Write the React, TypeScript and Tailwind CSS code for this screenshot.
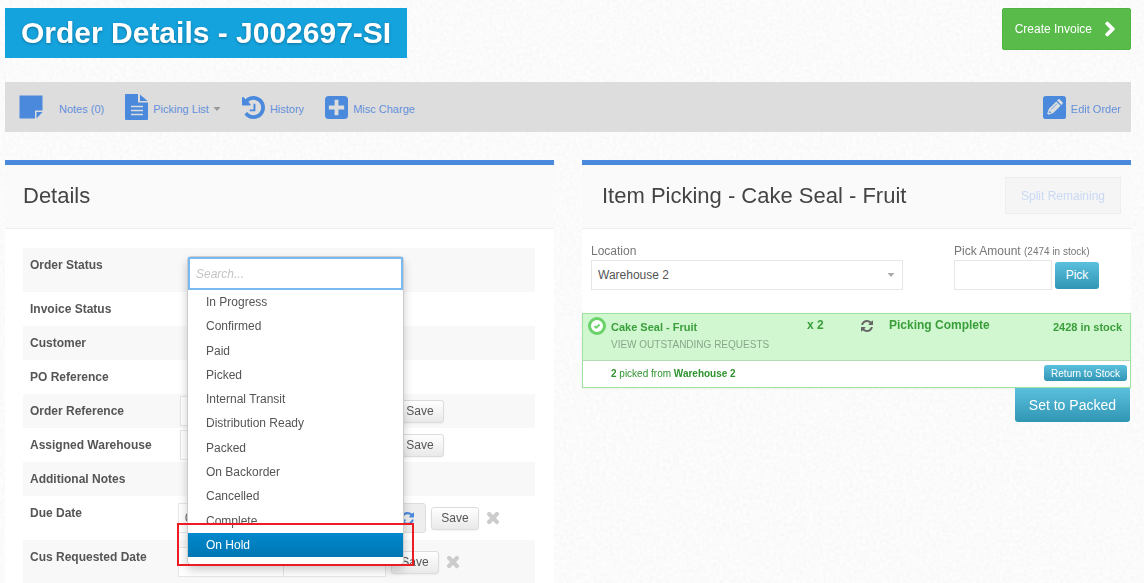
import React from "react";
import { FaChevronRight, FaTimes } from "react-icons/fa";

const statuses = [
  "In Progress",
  "Confirmed",
  "Paid",
  "Picked",
  "Internal Transit",
  "Distribution Ready",
  "Packed",
  "On Backorder",
  "Cancelled",
  "Complete",
  "On Hold",
];

function Texture() {
  return (
    <svg aria-hidden="true" className="fixed inset-0 -z-10 h-full w-full opacity-10">
      <filter id="paper">
        <feTurbulence type="fractalNoise" baseFrequency="0.3" numOctaves="2" seed="4" />
        <feColorMatrix values="0 0 0 0 0  0 0 0 0 0  0 0 0 0 0  0.4 0 0 0 -0.1" />
      </filter>
      <rect width="100%" height="100%" filter="url(#paper)" />
    </svg>
  );
}

function NoteIcon() {
  return (
    <svg aria-hidden="true" viewBox="0 0 24 24" className="size-6 fill-[#4a89dc]">
      <path d="M0.500 0.500H23.500V15.500H16V23.500H0.500Z M17.500 17H23.500L17.500 23.500Z" />
    </svg>
  );
}

function FileIcon() {
  return (
    <svg aria-hidden="true" viewBox="0 0 23 26" className="h-[26px] w-[23px]">
      <path d="M0.500 0H13V8.500H23V25Q23 26 22 26H1Q0 26 0 25V0.500Z M15 0.500L22.500 7H15Z" className="fill-[#4a89dc]" />
      <path d="M6 12.500H18M6 16.500H18M6 20.500H18" className="fill-none stroke-[#dddddd]" strokeWidth="1.500" />
    </svg>
  );
}

function HistoryIcon() {
  return (
    <svg aria-hidden="true" viewBox="0 0 1536 1536" className="size-[23px] fill-[#4a89dc]">
      <path d="M1536 768q0 156-61 298t-164 245-245 164-298 61q-172 0-327-72.500T177 1259q-7-10-6.500-22.500t8.500-20.500l137-138q10-9 25-9 16 2 23 12 73 95 179 147t225 52q104 0 198.500-40.500T1130 1130t109.500-163.500T1280 768t-40.500-198.500T1130 406 966.500 296.500 768 256q-98 0-188 35.500T420 393l137 138q31 30 14 69-17 40-59 40H64q-26 0-45-19T0 576V128q0-42 40-59 39-17 69 14l130 129Q346 111 483.500 55.500T768 0q156 0 298 61t245 164 164 245 61 298zM896 544v448q0 14-9 23t-23 9H544q-14 0-23-9t-9-23v-64q0-14 9-23t23-9h224V544q0-14 9-23t23-9h64q14 0 23 9t9 23z" />
    </svg>
  );
}

function PlusSquareIcon() {
  return (
    <svg aria-hidden="true" viewBox="0 0 24 24" className="size-[23px]">
      <rect width="24" height="24" rx="4" className="fill-[#4a89dc]" />
      <path d="M12 4V20M4 12H20" className="fill-none stroke-[#dddddd]" strokeWidth="4" />
    </svg>
  );
}

function PencilSquareIcon() {
  return (
    <svg aria-hidden="true" viewBox="0 0 24 24" className="size-[23px]">
      <rect width="24" height="24" rx="3" className="fill-[#4a89dc]" />
      <g className="fill-[#dddddd]" transform="translate(12 12) rotate(45)">
        <path d="M-3.200 -8.500Q-3.200 -9.800 -2 -9.800H2Q3.200 -9.800 3.200 -8.500V-7H-3.200Z M-3.200 -5.800H3.200V5L1 9.800H-1L-3.200 5Z" />
        <path d="M-1 -4.500V4" className="fill-none stroke-[#4a89dc]" strokeWidth="0.700" />
        <path d="M-1.200 6H1.200L0 8.500Z" className="fill-[#4a89dc]" />
      </g>
    </svg>
  );
}

function RefreshIcon({ className }: { className: string }) {
  return (
    <svg aria-hidden="true" viewBox="0 0 1536 1536" className={className}>
      <path d="M1511 928q0 5-1 7-64 268-268 434.500T764 1536q-146 0-282.500-55T238 1324l-129 129q-19 19-45 19t-45-19-19-45V960q0-26 19-45t45-19h448q26 0 45 19t19 45-19 45l-137 137q71 66 161 102t187 36q134 0 250-65t186-179q11-17 53-117 8-23 30-23h192q13 0 22.500 9.500t9.500 22.500zm25-800v448q0 26-19 45t-45 19h-448q-26 0-45-19t-19-45 19-45l138-138Q969 256 768 256q-134 0-250 65T332 500q-11 17-53 117-8 23-30 23H50q-13 0-22.500-9.500T18 608v-7q65-268 270-434.500T768 0q146 0 284 55.500T1297 212l130-129q19-19 45-19t45 19 19 45z" />
    </svg>
  );
}

function Caret({ className }: { className: string }) {
  return (
    <svg aria-hidden="true" viewBox="0 0 8 4" className={`h-1 w-2 ${className}`}>
      <path d="M0.500 0H7.500L4 4Z" />
    </svg>
  );
}

function Tool({ icon, children }: { icon: React.ReactNode; children: React.ReactNode }) {
  return (
    <a href="#" className="flex items-center gap-[5px] text-[11px] text-[#6490dc]">
      {icon}
      <span className="mt-1 flex items-center gap-1">{children}</span>
    </a>
  );
}

function SaveButton() {
  return (
    <button className="h-[23px] w-12 rounded-[3px] border border-[#dcdcdc] bg-linear-to-b from-white to-[#e9e9e9] text-[12px] text-[#555] shadow-xs">
      Save
    </button>
  );
}

function Row({ label, tall, id, children }: { label: string; tall?: boolean; id?: string; children?: React.ReactNode }) {
  return (
    <div className={`flex odd:bg-[#f8f8f8] ${tall ? "h-11" : "h-[34px]"}`}>
      <label htmlFor={id} className="w-[155px] shrink-0 pl-[7px] text-[12px] leading-[34px] font-bold text-[#555]">
        {label}
      </label>
      <div className="relative flex min-w-0 flex-1 items-center">{children}</div>
    </div>
  );
}

function StatusDropdown() {
  return (
    <div className="absolute top-2 left-[9px] z-10 w-[217px] rounded-sm border border-[#ccc] bg-white pb-[7px] shadow-[0_5px_10px_rgba(0,0,0,0.2)]">
      <input
        id="status"
        type="text"
        placeholder="Search..."
        className="block h-[33px] w-full border-2 border-[#7abaf0] bg-white px-1.5 text-[12px] text-[#555] outline-none placeholder:text-[#c4c4c4] placeholder:italic"
        autoFocus
      />
      <ul role="listbox" aria-label="Order Status" className="grid h-[267px] auto-rows-fr text-[12px] text-[#555]">
        {statuses.map((s) =>
          s === "On Hold" ? (
            <li key={s} role="option" aria-selected="true" className="relative flex items-center bg-linear-to-b from-[#0088cc] to-[#0077b3] pl-[18px] text-white">
              {s}
              <span className="absolute -top-2.5 -right-[11px] -bottom-[9px] -left-[11px] border-2 border-[#ed1c24]" />
            </li>
          ) : (
            <li key={s} role="option" aria-selected="false" className="flex items-center pl-[18px]">
              {s}
            </li>
          ),
        )}
      </ul>
    </div>
  );
}

const box = "h-[30px] border border-[#e6e6e6] bg-white text-[12px] text-[#555] outline-none";
const blue = "bg-linear-to-b from-[#5bc0de] to-[#2f96b4] text-white";

export default function App() {
  return (
    <div className="relative isolate flex min-h-screen flex-col bg-[#fdfdfd] pr-[13px] pl-[5px] font-['Liberation_Sans',Arial,sans-serif]">
      <Texture />
      <header className="flex items-start justify-between pt-2">
        <h1 className="bg-[#15a3de] px-4 text-[30px] leading-[50px] font-bold text-white [text-shadow:0_1px_3px_rgba(0,0,0,0.3)]">
          Order Details - J002697-SI
        </h1>
        <button className="flex h-[42px] items-center gap-2.5 rounded-xs border border-[#4fb443] bg-[#58bb4a] px-3 text-[12px] text-white">
          Create Invoice
          <FaChevronRight className="size-4 stroke-white stroke-[40px]" />
        </button>
      </header>

      <nav className="mt-6 flex h-[50px] items-center gap-[21px] bg-[#dddddd] pr-2.5 pl-3.5">
        <Tool icon={<NoteIcon />}>
          <span className="pl-[11px]">Notes (0)</span>
        </Tool>
        <Tool icon={<FileIcon />}>
          Picking List <Caret className="fill-[#999]" />
        </Tool>
        <Tool icon={<HistoryIcon />}>History</Tool>
        <Tool icon={<PlusSquareIcon />}>Misc Charge</Tool>
        <div className="ml-auto">
          <Tool icon={<PencilSquareIcon />}>Edit Order</Tool>
        </div>
      </nav>

      <main className="mt-7 grid flex-1 grid-cols-2 gap-7">
        <section className="border-t-[5px] border-[#4a89dc] bg-white">
          <div className="flex h-16 items-center border-b border-[#eee] bg-[#fafafa] px-[18px] pb-0.5">
            <h2 className="text-[22px] text-[#444]">Details</h2>
          </div>
          <div className="pt-[19px] pr-[19px] pl-[18px]">
            <Row label="Order Status" id="status" tall>
              <StatusDropdown />
            </Row>
            <Row label="Invoice Status" />
            <Row label="Customer" />
            <Row label="PO Reference" />
            <Row label="Order Reference" id="ref">
              <input id="ref" className={`${box} mr-2 ml-0.5 w-[208px]`} />
              <SaveButton />
            </Row>
            <Row label="Assigned Warehouse" id="wh">
              <input id="wh" className={`${box} mr-2 ml-0.5 w-[208px]`} />
              <SaveButton />
            </Row>
            <Row label="Additional Notes" />
            <Row label="Due Date" id="due" tall>
              <input id="due" defaultValue="01/02/2017" className={`${box} w-[210px] px-1.5`} />
              <button aria-label="Reset due date" className="mr-[5px] flex h-[30px] w-[38px] items-center rounded-r-[3px] border border-[#ddd] bg-[#eee] pl-3">
                <RefreshIcon className="size-[13px] fill-[#4a89dc]" />
              </button>
              <SaveButton />
              <button aria-label="Clear due date" className="ml-[6px]">
                <FaTimes className="size-4 stroke-[#ccc] stroke-[40px] text-[#ccc]" />
              </button>
            </Row>
            <Row label="Cus Requested Date" id="cus" tall>
              <input id="cus" className={`${box} w-[106px]`} />
              <input aria-label="Cus Requested Time" className={`${box} mr-[5px] w-[102px] border-l-0`} />
              <SaveButton />
              <button aria-label="Clear requested date" className="ml-[6px]">
                <FaTimes className="size-4 stroke-[#ccc] stroke-[40px] text-[#ccc]" />
              </button>
            </Row>
          </div>
        </section>

        <section className="border-t-[5px] border-[#4a89dc]">
          <div className="flex h-16 items-center justify-between border-b border-[#eee] bg-[#fafafa] pr-2.5 pb-0.5 pl-5">
            <h2 className="text-[22px] text-[#444]">Item Picking - Cake Seal - Fruit</h2>
            <button disabled className="h-[37px] border border-[#eee] bg-[#f5f5f5] px-[15px] text-[12px] text-[#c9d9f4]">
              Split Remaining
            </button>
          </div>
          <div className="flex h-[84px] justify-between bg-white pt-3.5 pr-8 pl-[9px]">
            <div className="w-[312px]">
              <label htmlFor="location" className="block text-[12px] leading-[17px] text-[#777]">
                Location
              </label>
              <div className="relative flex items-center">
                <select id="location" className={`${box} w-full appearance-none px-1.5`}>
                  <option>Warehouse 2</option>
                </select>
                <Caret className="pointer-events-none absolute right-2 fill-[#aaa]" />
              </div>
            </div>
            <div>
              <label htmlFor="amount" className="block text-[12px] leading-[17px] text-[#777]">
                Pick Amount <span className="text-[10px]">(2474 in stock)</span>
              </label>
              <div className="flex items-center gap-[3px]">
                <input id="amount" className={`${box} w-[98px]`} />
                <button className={`h-[27px] w-11 rounded-[3px] text-[12px] ${blue}`}>Pick</button>
              </div>
            </div>
          </div>
          <div className="border border-[#9fe29f] bg-white shadow-xs">
            <div className="grid h-[47px] grid-cols-[195px_78px_28px_1fr_auto] border-b border-[#b5d8b5] bg-[#d0f7d0] pt-[3px] pr-2 pl-[5px] text-[12px] leading-4 font-bold text-[#3a9e3a]">
              <div className="flex gap-[5px]">
                <svg aria-hidden="true" viewBox="0 0 18 18" className="size-[18px] shrink-0">
                  <circle cx="9" cy="9" r="7.500" className="fill-white stroke-[#69d269]" strokeWidth="3" />
                  <path d="M6.500 9L8.300 10.700L11.500 7.500" className="fill-none stroke-[#69d269]" strokeWidth="1.800" />
                </svg>
                <div>
                  <div className="pt-0.5 text-[11px]">Cake Seal - Fruit</div>
                  <a href="#" className="block pt-0.5 text-[10px] font-normal whitespace-nowrap text-[#8aa68a]">
                    VIEW OUTSTANDING REQUESTS
                  </a>
                </div>
              </div>
              <div className="pl-6">x 2</div>
              <RefreshIcon className="mt-[3px] size-3 fill-[#666]" />
              <div>Picking Complete</div>
              <div className="pt-0.5 text-[11px]">2428 in stock</div>
            </div>
            <div className="flex h-[26px] items-center justify-between pr-[3px] pb-0.5 pl-7 text-[10px] text-[#2e932e]">
              <span>
                <b>2</b> picked from <b>Warehouse 2</b>
              </span>
              <button className={`h-4 rounded-[3px] px-[7px] text-[10px] ${blue}`}>Return to Stock</button>
            </div>
          </div>
          <div className="flex justify-end pr-px">
            <button className={`h-[34px] rounded-b-[3px] px-3.5 text-[14px] ${blue}`}>Set to Packed</button>
          </div>
        </section>
      </main>
    </div>
  );
}
